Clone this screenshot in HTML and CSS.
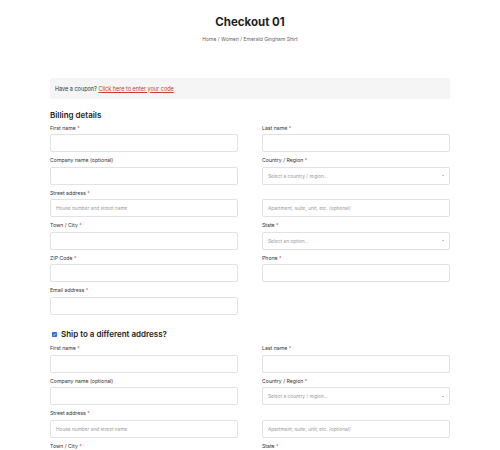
FILE: index.html
```html
<!DOCTYPE html>
<html lang="en">
<head>
<meta charset="utf-8">
<title>Checkout 01</title>
<link rel="stylesheet" href="styles.css">
</head>
<body>
<div class="page">
  <header class="page-head">
    <h1 class="title">Checkout 01</h1>
    <div class="crumbs">Home / Women / Emerald Gingham Shirt</div>
  </header>

  <div class="coupon">Have a coupon? <a href="#" class="coupon-link">Click here to enter your code</a></div>

  <h2 class="section-title">Billing details</h2>
  <div class="form-grid">
    <div class="field"><label class="lbl">First name <span class="req">*</span></label><div class="input"></div></div>
    <div class="field"><label class="lbl">Last name <span class="req">*</span></label><div class="input"></div></div>
    <div class="field"><label class="lbl">Company name (optional)</label><div class="input"></div></div>
    <div class="field"><label class="lbl">Country / Region <span class="req">*</span></label><div class="input select"><span class="ph">Select a country / region…</span><span class="caret"></span></div></div>
    <div class="field"><label class="lbl">Street address <span class="req">*</span></label><div class="input"><span class="ph">House number and street name</span></div></div>
    <div class="field"><label class="lbl">&nbsp;</label><div class="input"><span class="ph">Apartment, suite, unit, etc. (optional)</span></div></div>
    <div class="field"><label class="lbl">Town / City <span class="req">*</span></label><div class="input"></div></div>
    <div class="field"><label class="lbl">State <span class="req">*</span></label><div class="input select"><span class="ph">Select an option…</span><span class="caret"></span></div></div>
    <div class="field"><label class="lbl">ZIP Code <span class="req">*</span></label><div class="input"></div></div>
    <div class="field"><label class="lbl">Phone <span class="req">*</span></label><div class="input"></div></div>
    <div class="field"><label class="lbl">Email address <span class="req">*</span></label><div class="input"></div></div>
  </div>

  <h2 class="ship-title"><span class="check"><svg viewBox="0 0 10 10" width="5" height="5"><rect x="0" y="0" width="10" height="10" rx="1.5" fill="#2f6fde"/><path d="M2.5 5.2 L4.3 7 L7.6 3.2" fill="none" stroke="#fff" stroke-width="1.4"/></svg></span>Ship to a different address?</h2>
  <div class="form-grid">
    <div class="field"><label class="lbl">First name <span class="req">*</span></label><div class="input"></div></div>
    <div class="field"><label class="lbl">Last name <span class="req">*</span></label><div class="input"></div></div>
    <div class="field"><label class="lbl">Company name (optional)</label><div class="input"></div></div>
    <div class="field"><label class="lbl">Country / Region <span class="req">*</span></label><div class="input select"><span class="ph">Select a country / region…</span><span class="caret"></span></div></div>
    <div class="field"><label class="lbl">Street address <span class="req">*</span></label><div class="input"><span class="ph">House number and street name</span></div></div>
    <div class="field"><label class="lbl">&nbsp;</label><div class="input"><span class="ph">Apartment, suite, unit, etc. (optional)</span></div></div>
    <div class="field"><label class="lbl">Town / City <span class="req">*</span></label><div class="input"></div></div>
    <div class="field"><label class="lbl">State <span class="req">*</span></label><div class="input select"><span class="ph">Select an option…</span><span class="caret"></span></div></div>
  </div>
</div>
</body>
</html>
```

FILE: styles.css
```css
* { box-sizing: border-box; }
html, body { margin: 0; padding: 0; background: #fff; }
body {
  font-family: Inter, "Liberation Sans", sans-serif;
  color: #333;
  width: 500px;
  height: 450px;
  overflow: hidden;
}
.page {
  width: 400px;
  margin: 0 auto;
  padding-top: 15px;
}
.page-head { text-align: center; }
.title {
  margin: 0;
  font-size: 11.5px;
  line-height: 14px;
  font-weight: 700;
  color: #1f1f1f;
}
.crumbs {
  margin-top: 6.5px;
  font-size: 5px;
  line-height: 6px;
  color: #666;
}
.coupon {
  margin-top: 36.5px;
  height: 21px;
  display: flex;
  align-items: center;
  padding-left: 5px;
  background: #f5f5f5;
  border-radius: 2px;
  font-size: 5.5px;
  color: #333;
}
.coupon-link {
  color: #c8402c;
  text-decoration: underline;
  margin-left: 1.5px;
}
.section-title {
  margin: 11px 0 4.5px;
  font-size: 8px;
  line-height: 10px;
  font-weight: 600;
  color: #222;
}
.form-grid {
  display: grid;
  grid-template-columns: 188px 188px;
  column-gap: 24px;
  row-gap: 5px;
}
.field {
  display: flex;
  flex-direction: column;
  gap: 2px;
}
.lbl {
  font-size: 5.2px;
  line-height: 7.5px;
  color: #333;
}
.req { color: #e2401c; }
.input {
  height: 18px;
  border: 1px solid #e2e2e2;
  border-radius: 2px;
  display: flex;
  align-items: center;
  padding: 0 5px;
  background: #fff;
}
.ph {
  font-size: 4.8px;
  color: #9a9a9a;
}
.select { justify-content: space-between; }
.caret {
  width: 0;
  height: 0;
  border-left: 1.3px solid transparent;
  border-right: 1.3px solid transparent;
  border-top: 1.6px solid #888;
}
.ship-title {
  margin: 14.5px 0 6px;
  display: flex;
  align-items: center;
  gap: 4px;
  font-size: 8px;
  line-height: 10px;
  font-weight: 600;
  color: #222;
  padding-left: 2px;
}
.check { display: flex; }
```
